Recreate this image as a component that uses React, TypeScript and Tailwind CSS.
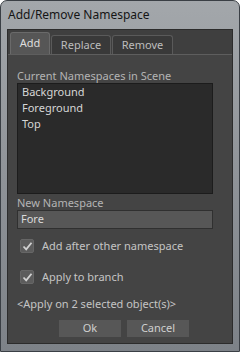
import React from "react";

function Check(props: { label: string }) {
  return (
    <label className="flex items-center gap-[8px] pl-[3px] h-[14px]">
      <span className="flex h-[14px] w-[14px] items-center justify-center rounded-[2px] bg-[#5c5c5c] border border-[#666]">
        <svg width="11" height="11" viewBox="0 0 11 11">
          <path d="M1.5 5.5 L4.2 8.3 L9.5 1.8" fill="none" stroke="#d2d2d2" strokeWidth="1.8" />
        </svg>
      </span>
      <span className="text-[#c4c4c4]">{props.label}</span>
    </label>
  );
}

export default function App() {
  return (
    <div
      className="flex h-[352px] w-[240px] flex-col rounded-t-[7px] border border-[#3a3f45] bg-gradient-to-b from-[#a3a7ab] via-[#8f9398] to-[#7d8288] text-[11px]"
      style={{ fontFamily: '"Noto Sans", "DejaVu Sans", sans-serif' }}
    >
      <div className="flex h-[28px] items-center pl-[7px] text-[12px] text-[#151515]">
        Add/Remove Namespace
      </div>
      <div className="mx-[6px] flex flex-1 flex-col border border-[#2c2c2c] bg-[#3f3f3f] mb-[7px]">
        <div className="flex items-end gap-[1px] pl-[2px] pt-[2px]">
          <div className="flex h-[22px] w-[40px] items-center justify-center rounded-t-[3px] border border-b-0 border-[#6a6a6a] bg-[#565656] text-[#dedede]">
            Add
          </div>
          <div className="flex h-[19px] w-[60px] items-center justify-center rounded-t-[3px] border border-b-0 border-[#5a5a5a] bg-[#393939] text-[#bdbdbd]">
            Replace
          </div>
          <div className="flex h-[19px] w-[61px] items-center justify-center rounded-t-[3px] border border-b-0 border-[#5a5a5a] bg-[#393939] text-[#bdbdbd]">
            Remove
          </div>
        </div>
        <div className="flex flex-1 flex-col border-t border-[#5e5e5e] bg-[#444444] px-[9px] pt-[8px]">
          <div className="text-[#b4b4b4] leading-[14px] mt-[6px]">Current Namespaces in Scene</div>
          <div className="h-[111px] w-[196px] border border-[#1c1c1c] bg-[#2a2a2a] px-[4px] text-[#d6d6d6] leading-[16px]">
            <div>Background</div>
            <div>Foreground</div>
            <div>Top</div>
          </div>
          <div className="mt-[2px] text-[#b4b4b4] leading-[14px]">New Namespace</div>
          <div className="flex h-[19px] w-[196px] items-center border border-[#303030] bg-[#575757] px-[3px] text-[#dadada]">
            Fore
          </div>
          <div className="mt-[10px] flex flex-col gap-[17px]">
            <Check label="Add after other namespace" />
            <Check label="Apply to branch" />
          </div>
          <div className="mt-[12px] text-[#c4c4c4]">&lt;Apply on 2 selected object(s)&gt;</div>
          <div className="mt-[7px] flex justify-center gap-[6px] pl-[8px]">
            <div className="flex h-[17px] w-[62px] items-center justify-center bg-[#575757] text-[#cfcfcf]">Ok</div>
            <div className="flex h-[17px] w-[62px] items-center justify-center bg-[#575757] text-[#cfcfcf]">Cancel</div>
          </div>
        </div>
      </div>
    </div>
  );
}
